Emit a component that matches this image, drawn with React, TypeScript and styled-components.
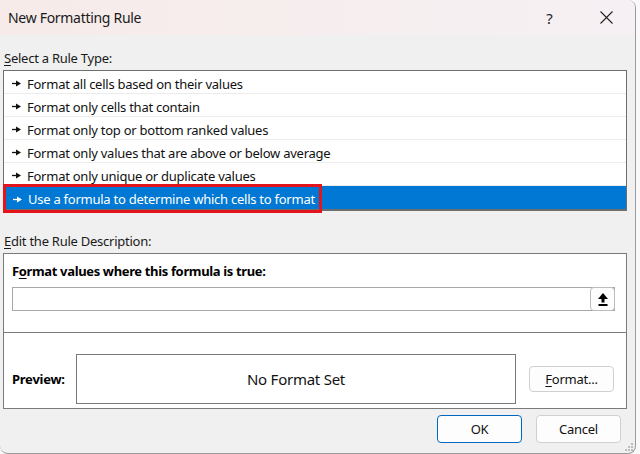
import styled, { createGlobalStyle } from "styled-components";

const GlobalStyle = createGlobalStyle`
    html, body {
        margin: 0;
        padding: 0;
        background: #f9f9f9;
    }
    body {
        font-family: "Noto Sans", "Open Sans", sans-serif;
        font-size: 13px;
        letter-spacing: -0.25px;
        color: #000;
    }
`;

const Window = styled.div`
    position: relative;
    width: 635px;
    height: 453px;
    background: #f0f0f0;
    border-right: 1px solid #9a9a9a;
    border-bottom: 1px solid #9a9a9a;
    border-radius: 0 8px 8px 8px;
    overflow: hidden;
    box-sizing: content-box;
`;

const TitleBar = styled.div`
    height: 35px;
    display: flex;
    align-items: center;
    background: linear-gradient(90deg, #f6ebe9 0%, #f6eeee 50%, #f6f0f4 100%);
    padding-left: 8px;
`;

const Title = styled.div`
    flex: 1;
    font-size: 14px;
    letter-spacing: -0.3px;
    color: #1a1a1a;
`;

const TitleButton = styled.div`
    width: 57px;
    height: 35px;
    display: flex;
    align-items: center;
    justify-content: center;
    font-size: 15px;
    color: #222;
    &:first-of-type {
        margin-right: 2px;
    }
`;

const Body = styled.div`
    padding: 15px 8px 0 3px;
`;

const SectionLabel = styled.div<{ $gap?: number }>`
    height: 16px;
    line-height: 16px;
    padding-left: 1px;
    margin-top: ${(p) => p.$gap ?? 0}px;
    margin-bottom: 4px;
    color: #1a1a1a;
    u {
        text-decoration-thickness: 1px;
        text-underline-offset: 2px;
    }
`;

const ListBox = styled.div`
    position: relative;
    border: 1px solid #6e6e6e;
    border-bottom-width: 2px;
    background: #fff;
    display: flex;
    flex-direction: column;
`;

const Row = styled.div<{ $selected?: boolean }>`
    height: 23px;
    display: flex;
    align-items: center;
    gap: 6px;
    padding: 3px 0 0 8px;
    box-sizing: border-box;
    border-bottom: ${(p) => (p.$selected ? "none" : "1px solid #ececec")};
    background: ${(p) => (p.$selected ? "#0078d4" : "#fff")};
    color: ${(p) => (p.$selected ? "#fff" : "#111")};
    margin: ${(p) => (p.$selected ? "0 0 0 1px" : "0")};
`;

const Highlight = styled.div`
    position: absolute;
    left: -1px;
    top: 113px;
    width: 313px;
    height: 23px;
    border: 3px solid #e3141c;
    pointer-events: none;
`;

const DescBox = styled.div`
    border: 1px solid #7a7a7a;
    background: #fff;
    height: 156px;
    box-sizing: border-box;
    display: flex;
    flex-direction: column;
`;

const FormulaPart = styled.div`
    padding: 9px 11px 0 8px;
    height: 79px;
    box-sizing: border-box;
    border-bottom: 1px solid #7a7a7a;
`;

const BoldLabel = styled.div`
    font-weight: 700;
    height: 16px;
    line-height: 16px;
    margin-bottom: 8px;
    letter-spacing: -0.35px;
    u {
        text-underline-offset: 2px;
    }
`;

const FormulaInput = styled.div`
    height: 24px;
    box-sizing: border-box;
    border: 1px solid #a8a8a8;
    display: flex;
    justify-content: flex-end;
`;

const RefButton = styled.div`
    width: 25px;
    height: 24px;
    margin-top: -1px;
    margin-right: -1px;
    box-sizing: border-box;
    border: 1px solid #bcbcbc;
    border-radius: 4px;
    background: #fdfdfd;
    display: flex;
    align-items: center;
    justify-content: center;
`;

const PreviewPart = styled.div`
    display: flex;
    align-items: center;
    padding: 21px 0 0 8px;
`;

const PreviewLabel = styled.div`
    font-weight: 700;
    width: 64px;
`;

const PreviewBox = styled.div`
    width: 440px;
    height: 50px;
    box-sizing: border-box;
    border: 1px solid #7a7a7a;
    display: flex;
    align-items: center;
    justify-content: center;
    font-size: 15px;
    color: #111;
`;

const Button = styled.div<{ $default?: boolean }>`
    width: 85px;
    height: 28px;
    box-sizing: border-box;
    border: 1px solid ${(p) => (p.$default ? "#0067c0" : "#d0d0d0")};
    border-radius: 4px;
    background: #fdfdfd;
    display: flex;
    align-items: center;
    justify-content: center;
    color: #111;
    u {
        text-underline-offset: 2px;
    }
`;

const FormatButton = styled(Button)`
    height: 26px;
    margin-left: 13px;
`;

const Footer = styled.div`
    display: flex;
    justify-content: flex-end;
    gap: 14px;
    padding: 6px 6px 0 0;
`;

const Grip = styled.svg`
    position: absolute;
    right: 2px;
    bottom: 2px;
`;

function Pointer({ color }: { color: string }) {
    return (
        <svg width="9" height="7" viewBox="0 0 9 7">
            <path d="M0 3.5h5" stroke={color} strokeWidth="1.3" />
            <polygon points="4,0.5 9,3.5 4,6.5" fill={color} />
        </svg>
    );
}

const rules = [
    "Format all cells based on their values",
    "Format only cells that contain",
    "Format only top or bottom ranked values",
    "Format only values that are above or below average",
    "Format only unique or duplicate values",
    "Use a formula to determine which cells to format",
];

export default function App() {
    return (
        <>
            <GlobalStyle />
            <Window>
                <TitleBar>
                    <Title>New Formatting Rule</Title>
                    <TitleButton>?</TitleButton>
                    <TitleButton>
                        <svg width="13" height="13" viewBox="0 0 13 13">
                            <path d="M0.5 0.5l12 12M12.5 0.5l-12 12" stroke="#222" strokeWidth="1.1" />
                        </svg>
                    </TitleButton>
                </TitleBar>
                <Body>
                    <SectionLabel>
                        <u>S</u>elect a Rule Type:
                    </SectionLabel>
                    <ListBox>
                        {rules.map((r, i) => {
                            const sel = i === rules.length - 1;
                            return (
                                <Row key={r} $selected={sel}>
                                    <Pointer color={sel ? "#fff" : "#111"} />
                                    {r}
                                </Row>
                            );
                        })}
                        <Highlight />
                    </ListBox>
                    <SectionLabel $gap={22}>
                        <u>E</u>dit the Rule Description:
                    </SectionLabel>
                    <DescBox>
                        <FormulaPart>
                            <BoldLabel>
                                F<u>o</u>rmat values where this formula is true:
                            </BoldLabel>
                            <FormulaInput>
                                <RefButton>
                                    <svg width="10" height="13" viewBox="0 0 10 13">
                                        <polygon points="5,0 10,6 0,6" fill="#000" />
                                        <rect x="3.5" y="5.5" width="3" height="4" fill="#000" />
                                        <rect x="0.5" y="11" width="9" height="2" fill="#000" />
                                    </svg>
                                </RefButton>
                            </FormulaInput>
                        </FormulaPart>
                        <PreviewPart>
                            <PreviewLabel>Preview:</PreviewLabel>
                            <PreviewBox>No Format Set</PreviewBox>
                            <FormatButton>
                                <u>F</u>ormat...
                            </FormatButton>
                        </PreviewPart>
                    </DescBox>
                    <Footer>
                        <Button $default>OK</Button>
                        <Button>Cancel</Button>
                    </Footer>
                </Body>
                <Grip width="8" height="8" viewBox="0 0 8 8">
                    <rect x="6" y="0" width="2" height="2" fill="#bdbdbd" />
                    <rect x="3" y="3" width="2" height="2" fill="#bdbdbd" />
                    <rect x="6" y="3" width="2" height="2" fill="#bdbdbd" />
                    <rect x="0" y="6" width="2" height="2" fill="#bdbdbd" />
                    <rect x="3" y="6" width="2" height="2" fill="#bdbdbd" />
                    <rect x="6" y="6" width="2" height="2" fill="#bdbdbd" />
                </Grip>
            </Window>
        </>
    );
}
